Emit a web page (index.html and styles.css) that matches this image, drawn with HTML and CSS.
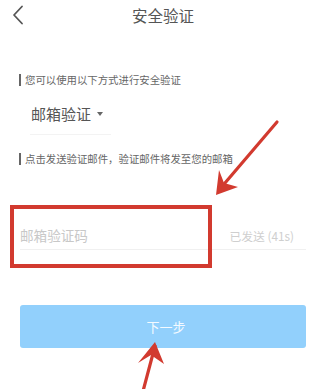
FILE: index.html
```html
<!DOCTYPE html>
<html lang="zh-CN">
<head>
    <meta charset="UTF-8">
    <meta name="viewport" content="width=device-width, initial-scale=1.0">
    <title>安全验证</title>
    <link rel="stylesheet" href="styles.css">
</head>
<body>
    <div class="page">
        <div class="header">
            <span class="back">
                <svg width="12" height="20" viewBox="0 0 12 20"><path d="M10 1.5 L2 10 L10 18.5" fill="none" stroke="#555" stroke-width="1.8" stroke-linecap="round" stroke-linejoin="round"/></svg>
            </span>
            <div class="title">安全验证</div>
            <span></span>
        </div>

        <div class="tip">您可以使用以下方式进行安全验证</div>

        <div class="select">
            <span>邮箱验证</span>
            <span class="caret"></span>
        </div>

        <div class="tip tip-second">点击发送验证邮件，验证邮件将发至您的邮箱</div>

        <div class="code-row">
            <input type="text" class="code-input" placeholder="邮箱验证码">
            <span class="resend">已发送 (41s)</span>
        </div>

        <button class="next-btn">下一步</button>

        <!-- пометки поверх скриншота -->
        <div class="mark-box"></div>
        <svg class="marks" width="320" height="389" viewBox="0 0 320 389">
            <g stroke="#d23a2f" stroke-width="3.2" stroke-linecap="round" fill="none">
                <path d="M277 122 L219 190"/>
                <path d="M142 395 L155 346"/>
            </g>
            <g fill="#d23a2f">
                <path d="M216 195 L219 170 L224 183 L238 187 Z"/>
                <path d="M155 342 L138 363 L151 355 L164 364 Z"/>
            </g>
        </svg>
    </div>
</body>
</html>
```

FILE: styles.css
```css
body {
    margin: 0;
    padding: 0;
    background: #ffffff;
    font-family: "Noto Sans CJK SC", "Noto Sans", sans-serif;
    color: #555;
    overflow: hidden;
}
.page {
    position: relative;
    width: 320px;
    height: 389px;
}
.header {
    height: 30px;
    display: grid;
    grid-template-columns: 40px 1fr 40px;
    align-items: center;
}
.back {
    display: flex;
    padding-left: 12px;
}
.title {
    text-align: center;
    font-size: 15.5px;
    color: #555;
    padding-left: 6px;
}
.tip {
    margin: 44px 0 0 19px;
    padding-left: 4px;
    border-left: 2px solid #666;
    font-size: 10.4px;
    line-height: 12px;
    color: #666;
    width: fit-content;
}
.tip-second {
    margin-top: 18px;
}
.select {
    margin: 18px 0 0 30px;
    width: 80px;
    padding: 0 0 10px 1px;
    line-height: 20px;
    font-size: 15px;
    color: #555;
    border-bottom: 1px solid #f3f3f3;
    display: flex;
    align-items: center;
    gap: 6px;
}
.caret {
    width: 0;
    height: 0;
    border-left: 3.5px solid transparent;
    border-right: 3.5px solid transparent;
    border-top: 4px solid #666;
}
.code-row {
    margin: 56px 14px 0 20px;
    height: 28px;
    display: flex;
    align-items: center;
    border-bottom: 1px solid #f0f0f0;
}
.code-input {
    flex: 1;
    border: none;
    outline: none;
    padding: 0;
    font-family: inherit;
    font-size: 13.6px;
    color: #333;
    background: transparent;
}
.code-input::placeholder {
    color: #c8c8c8;
}
.resend {
    font-size: 11.8px;
    color: #cfcfcf;
    padding-right: 12px;
    font-family: "Noto Sans CJK SC", "Roboto", sans-serif;
}
.next-btn {
    display: block;
    margin: 55px 0 0 20px;
    width: 286px;
    height: 43px;
    border: none;
    border-radius: 3px;
    background: #92d0fc;
    color: #f4faff;
    font-family: inherit;
    font-size: 13px;
    padding: 0 0 0 6px;
}
.mark-box {
    position: absolute;
    left: 10px;
    top: 205px;
    width: 194px;
    height: 55px;
    border: 4px solid #d23a2f;
}
.marks {
    position: absolute;
    left: 0;
    top: 0;
    pointer-events: none;
}
```
